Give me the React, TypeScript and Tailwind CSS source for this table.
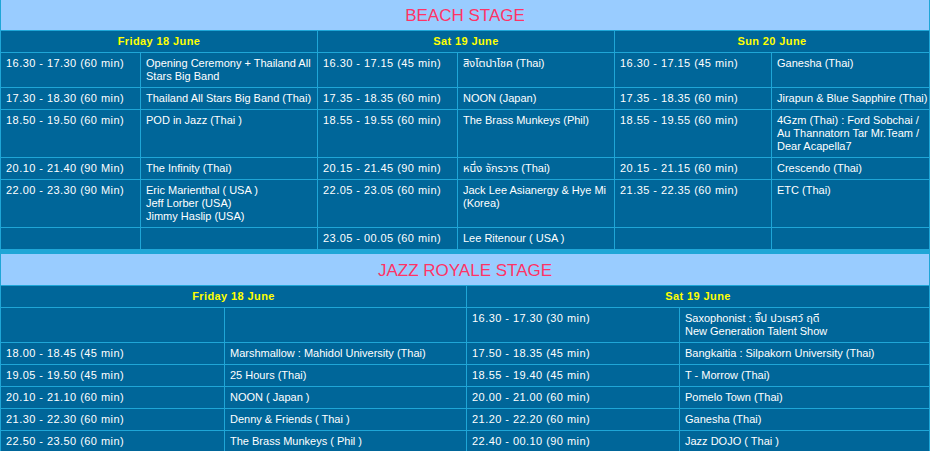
const font = { fontFamily: '"Liberation Sans", "Noto Sans Thai", "Noto Sans", sans-serif' };

type Row = string[][];

const beach: Row[] = [
  [["16.30 - 17.30 (60 min)"], ["Opening Ceremony + Thailand All", "Stars Big Band"], ["16.30 - 17.15 (45 min)"], ["สิงโตนำโชค (Thai)"], ["16.30 - 17.15 (45 min)"], ["Ganesha (Thai)"]],
  [["17.30 - 18.30 (60 min)"], ["Thailand All Stars Big Band (Thai)"], ["17.35 - 18.35 (60 min)"], ["NOON (Japan)"], ["17.35 - 18.35 (60 min)"], ["Jirapun & Blue Sapphire (Thai)"]],
  [["18.50 - 19.50 (60 min)"], ["POD in Jazz (Thai )"], ["18.55 - 19.55 (60 min)"], ["The Brass Munkeys (Phil)"], ["18.55 - 19.55 (60 min)"], ["4Gzm (Thai) : Ford Sobchai /", "Au Thannatorn Tar Mr.Team /", "Dear Acapella7"]],
  [["20.10 - 21.40 (90 Min)"], ["The Infinity (Thai)"], ["20.15 - 21.45 (90 min)"], ["หนึ่ง จักรวาร (Thai)"], ["20.15 - 21.15 (60 min)"], ["Crescendo (Thai)"]],
  [["22.00 - 23.30 (90 Min)"], ["Eric Marienthal ( USA )", "Jeff Lorber (USA)", "Jimmy Haslip (USA)"], ["22.05 - 23.05 (60 min)"], ["Jack Lee Asianergy & Hye Mi", "(Korea)"], ["21.35 - 22.35 (60 min)"], ["ETC (Thai)"]],
  [[], [], ["23.05 - 00.05 (60 min)"], ["Lee Ritenour ( USA )"], [], []],
];

const royale: Row[] = [
  [[], [], ["16.30 - 17.30 (30 min)"], ["Saxophonist : จิ๊ป ปวเรศว์ ฤดี", "New Generation Talent Show"]],
  [["18.00 - 18.45 (45 min)"], ["Marshmallow : Mahidol University (Thai)"], ["17.50 - 18.35 (45 min)"], ["Bangkaitia : Silpakorn University (Thai)"]],
  [["19.05 - 19.50 (45 min)"], ["25 Hours (Thai)"], ["18.55 - 19.40 (45 min)"], ["T - Morrow (Thai)"]],
  [["20.10 - 21.10 (60 min)"], ["NOON ( Japan )"], ["20.00 - 21.00 (60 min)"], ["Pomelo Town (Thai)"]],
  [["21.30 - 22.30 (60 min)"], ["Denny & Friends ( Thai )"], ["21.20 - 22.20 (60 min)"], ["Ganesha (Thai)"]],
  [["22.50 - 23.50 (60 min)"], ["The Brass Munkeys ( Phil )"], ["22.40 - 00.10 (90 min)"], ["Jazz DOJO ( Thai )"]],
];

function Cell({ lines, time }: { lines: string[]; time: boolean }) {
  return (
    <td
      className={
        "bg-[#006699] px-1 py-1 align-top whitespace-nowrap overflow-hidden text-[11px] leading-[13px] text-white " +
        (time ? "tracking-[0.45px]" : "")
      }
    >
      {lines.map((l, i) => (
        <div key={i} className="pl-px">{l}</div>
      ))}
    </td>
  );
}

function Stage({ title, days, widths, rows, titleH }: { title: string; days: string[]; widths: string[]; rows: Row[]; titleH: string }) {
  return (
    <table className="w-full table-fixed border-separate border-spacing-[1px]">
      <colgroup>
        {widths.map((w, i) => (
          <col key={i} className={w} />
        ))}
      </colgroup>
      <tbody>
        <tr className={titleH}>
          <td colSpan={widths.length} className="bg-[#99ccff] text-center align-middle text-[17px] text-[#ff3366] pt-[2px]">
            {title}
          </td>
        </tr>
        <tr className="h-[21px]">
          {days.map((d) => (
            <td key={d} colSpan={2} className="bg-[#006699] text-center align-middle text-[11px] font-bold tracking-[0.4px] text-[#ffff00]">
              {d}
            </td>
          ))}
        </tr>
        {rows.map((r, i) => (
          <tr key={i}>
            {r.map((c, j) => (
              <Cell key={j} lines={c} time={j % 2 === 0} />
            ))}
          </tr>
        ))}
      </tbody>
    </table>
  );
}

export default function App() {
  return (
    <div className="w-[930px] h-[451px] overflow-hidden bg-[#1fa6d7]" style={font}>
      <div className="-mt-px">
        <Stage
          title="BEACH STAGE"
          titleH="h-[30px]"
          days={["Friday 18 June", "Sat 19 June", "Sun 20 June"]}
          widths={["w-[139px]", "w-[176px]", "w-[139px]", "w-[156px]", "w-[156px]", "w-[157px]"]}
          rows={beach}
        />
      </div>
      <div className="mt-[3px]">
        <Stage
          title="JAZZ ROYALE STAGE"
          titleH="h-[31px]"
          days={["Friday 18 June", "Sat 19 June"]}
          widths={["w-[223px]", "w-[241px]", "w-[212px]", "w-[249px]"]}
          rows={royale}
        />
      </div>
    </div>
  );
}
